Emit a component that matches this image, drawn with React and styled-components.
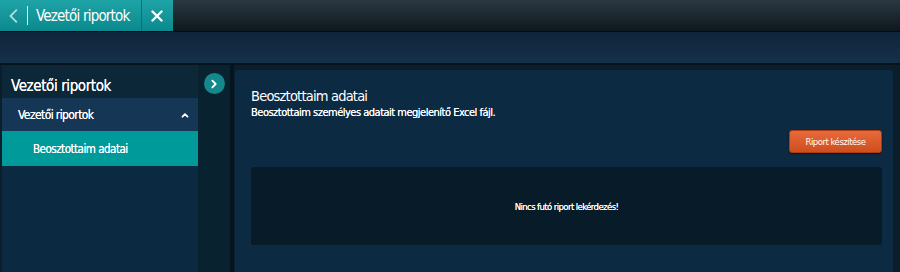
import React from "react"
import styled, { createGlobalStyle } from "styled-components"

const GlobalStyle = createGlobalStyle`
  html, body {
    margin: 0;
    padding: 0;
    background: #081722;
  }
  body {
    font-family: "DejaVu Sans Condensed", "Open Sans", sans-serif;
    color: #fff;
  }
`

const Page = styled.div`
  width: 900px;
  height: 272px;
  display: flex;
  flex-direction: column;
  overflow: hidden;
  background: #081722;
`

const TopBar = styled.div`
  height: 31px;
  display: flex;
  background: linear-gradient(#2a3843, #0e171d);
  border-bottom: 1px solid #050d13;
`

const Tab = styled.div`
  display: flex;
  align-items: center;
  background: linear-gradient(#1ea3a6, #0b8a8e);
  height: 31px;
`

const TabPart = styled.div`
  display: flex;
  align-items: center;
  height: 100%;
  padding: ${(p) => p.$pad || "0 8px"};
  border-left: ${(p) => (p.$divider ? "1px solid #0b6f73" : "none")};
`

const Separator = styled.span`
  width: 1px;
  height: 19px;
  background: #e0f4f4;
  margin: 0 8px 0 6px;
`

const TabTitle = styled.span`
  font-size: 15px;
  color: #fff;
  letter-spacing: -0.8px;
`

const SubBar = styled.div`
  height: 31px;
  background: linear-gradient(#10253a, #15304a);
  border-bottom: 2px solid #07131d;
`

const Body = styled.div`
  flex: 1;
  display: flex;
  padding: 0 7px 0 2px;
  background: #0a1e2c;
`

const Sidebar = styled.div`
  width: 196px;
  background: #0b2940;
`

const SideTitle = styled.div`
  height: 30px;
  display: flex;
  align-items: flex-end;
  padding: 0 9px 3px;
  font-size: 15px;
  letter-spacing: -0.4px;
  text-shadow: 0 0 0.5px #fff;
  background: #0c2738;
`

const GroupRow = styled.div`
  height: 33px;
  display: flex;
  align-items: center;
  justify-content: space-between;
  padding: 0 8px 0 16px;
  background: #153654;
  font-size: 12px;
  letter-spacing: -0.6px;
  text-shadow: 0 0 0.5px #fff;
`

const ItemRow = styled.div`
  height: 35px;
  display: flex;
  align-items: center;
  padding-left: 31px;
  background: ${(p) => (p.$active ? "#009a9b" : "transparent")};
  font-size: 11.5px;
  letter-spacing: -0.5px;
  text-shadow: 0 0 0.5px #fff;
`

const Gutter = styled.div`
  width: 32px;
  background: #09222f;
  display: flex;
  justify-content: center;
  padding-top: 8px;
  border-right: 4px solid #06141d;
`

const RoundButton = styled.div`
  width: 21px;
  height: 21px;
  border-radius: 50%;
  background: #13898d;
  display: flex;
  align-items: center;
  justify-content: center;
`

const Main = styled.div`
  flex: 1;
  margin-top: 5px;
  background: #0d2a43;
  border-radius: 4px 4px 0 0;
  padding: 17px 11px 0 16px;
  border-left: 1px solid #0b2236;
`

const Title = styled.div`
  font-size: 14.5px;
  line-height: 18px;
  letter-spacing: -0.8px;
`

const Subtitle = styled.div`
  font-size: 11px;
  line-height: 13px;
  letter-spacing: -0.5px;
  text-shadow: 0 0 0.5px #fff;
  margin-top: 1px;
`

const Actions = styled.div`
  display: flex;
  justify-content: flex-end;
  margin-top: 11px;
`

const OrangeButton = styled.button`
  width: 93px;
  height: 23px;
  border: 1px solid #a83d14;
  border-radius: 3px;
  background: linear-gradient(#e8693a, #cf4e1e);
  color: #fff;
  font-family: "DejaVu Sans Condensed", "Open Sans", sans-serif;
  font-size: 9.5px;
  letter-spacing: -0.5px;
  box-shadow: 0 1px 2px rgba(0, 0, 0, 0.5);
`

const EmptyBox = styled.div`
  height: 78px;
  margin-top: 14px;
  background: #071b28;
  border-radius: 3px;
  display: flex;
  align-items: center;
  justify-content: center;
  font-size: 9.5px;
  letter-spacing: -0.6px;
  text-shadow: 0 0 0.5px #fff;
`

const Chevron = ({ dir = "left", color = "#cfeeee", size = 12 }) => (
  <svg width={size} height={size} viewBox="0 0 12 12">
    <path
      d={dir === "left" ? "M8 1 L3 6 L8 11" : dir === "right" ? "M4 2 L8 6 L4 10" : "M3 8 L6 5 L9 8"}
      fill="none"
      stroke={color}
      strokeWidth={dir === "left" ? 1.6 : 2.2}
      strokeLinecap="round"
      strokeLinejoin="round"
    />
  </svg>
)

const Close = () => (
  <svg width="12" height="12" viewBox="0 0 12 12">
    <path d="M1.5 1.5 L10.5 10.5 M10.5 1.5 L1.5 10.5" stroke="#fff" strokeWidth="2.4" strokeLinecap="round" />
  </svg>
)

export default function App() {
  return (
    <Page>
      <GlobalStyle />
      <TopBar>
        <Tab>
          <TabPart $pad="0 11px 0 7px">
            <Chevron dir="left" color="#a9dcdd" size={14} />
            <Separator />
            <TabTitle>Vezetői riportok</TabTitle>
          </TabPart>
          <TabPart $pad="0 10px 0 9px" $divider>
            <Close />
          </TabPart>
        </Tab>
      </TopBar>
      <SubBar />
      <Body>
        <Sidebar>
          <SideTitle>Vezetői riportok</SideTitle>
          <GroupRow>
            Vezetői riportok
            <Chevron dir="up" color="#fff" size={10} />
          </GroupRow>
          <ItemRow $active>Beosztottaim adatai</ItemRow>
        </Sidebar>
        <Gutter>
          <RoundButton>
            <Chevron dir="right" color="#fff" size={10} />
          </RoundButton>
        </Gutter>
        <Main>
          <Title>Beosztottaim adatai</Title>
          <Subtitle>Beosztottaim személyes adatait megjelenítő Excel fájl.</Subtitle>
          <Actions>
            <OrangeButton>Riport készítése</OrangeButton>
          </Actions>
          <EmptyBox>Nincs futó riport lekérdezés!</EmptyBox>
        </Main>
      </Body>
    </Page>
  )
}
